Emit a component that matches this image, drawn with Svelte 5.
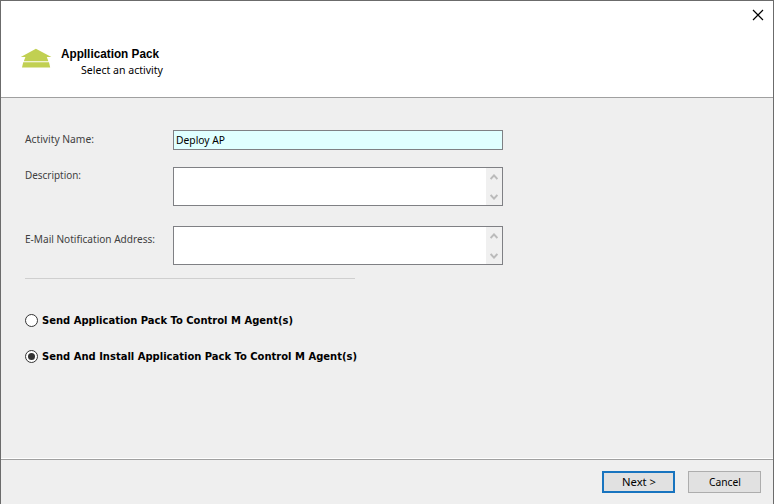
<script>
  let name = $state('Deploy AP');
  let selected = $state(1);
  const options = [
    { text: 'Send Application Pack To Control M Agent(s)', width: 251 },
    { text: 'Send And Install Application Pack To Control M Agent(s)', width: 315 }
  ];
</script>

{#snippet label(text, width, bold = false)}
  <svg class="label" class:bold {width} height="16" role="img" aria-label={text}>
    <text x="0" y="12" textLength={width} lengthAdjust="spacingAndGlyphs">{text}</text>
  </svg>
{/snippet}

{#snippet area(title)}
  <div class="area" role="textbox" aria-label={title} aria-multiline="true" tabindex="0">
    <div class="scroll">
      <svg width="8" height="6" viewBox="0 0 8 6"><path d="M.6 5 4 1.4 7.4 5" /></svg>
      <svg width="8" height="6" viewBox="0 0 8 6"><path d="M.6 1 4 4.6 7.4 1" /></svg>
    </div>
  </div>
{/snippet}

<main class="dialog">
  <header>
    <svg class="logo" width="32" height="22" viewBox="0 0 32 22">
      <path fill="#c1d052" d="M15.9 .8 31.4 8.9H26.8L28.4 13.2H3.8L5.4 8.9H.8zM3.2 14.3H29L30.2 19.6H2z" />
    </svg>
    <div class="titles">
      <div class="title">{@render label('Appllication Pack', 98, true)}</div>
      <div class="subtitle">{@render label('Select an activity', 82)}</div>
    </div>
    <button class="close" aria-label="Close">
      <svg width="12" height="12" viewBox="0 0 12 12"><path d="M1 1 11 11M11 1 1 11" /></svg>
    </button>
  </header>

  <section>
    <div class="row name">
      <div class="caption">{@render label('Activity Name:', 69)}</div>
      <div class="input" role="textbox" tabindex="0">{@render label(name, 49)}</div>
    </div>
    <div class="row description">
      <div class="caption">{@render label('Description:', 56)}</div>
      {@render area('Description')}
    </div>
    <div class="row email">
      <div class="caption">{@render label('E-Mail Notification Address:', 130)}</div>
      {@render area('E-Mail Notification Address')}
    </div>
    <hr />
    <div class="options">
      {#each options as option, i}
        <button class="option" onclick={() => (selected = i)}>
          <svg width="13" height="13" viewBox="0 0 13 13">
            <circle cx="6.5" cy="6.5" r="6" fill="#fff" stroke="#333" />
            {#if selected === i}<circle cx="6.5" cy="6.5" r="3.5" fill="#333" />{/if}
          </svg>
          {@render label(option.text, option.width, true)}
        </button>
      {/each}
    </div>
  </section>

  <footer>
    <button class="push primary">{@render label('Next >', 34)}</button>
    <button class="push">{@render label('Cancel', 32)}</button>
  </footer>
</main>

<style>
  .dialog {
    box-sizing: border-box;
    width: 774px;
    height: 504px;
    display: flex;
    flex-direction: column;
    border: 1px solid #6b6b6b;
    border-bottom: 0;
    background: #efefef;
    color: #000;
    font-family: "DejaVu Sans Condensed", "DejaVu Sans", sans-serif;
    font-size: 11px;
  }
  button {
    padding: 0;
    border: 0;
    background: none;
    color: inherit;
    font: inherit;
  }
  svg { display: block; flex: none; }
  .label { overflow: visible; fill: currentColor; font-family: "Noto Sans", sans-serif; font-size: 11.5px; }
  .label.bold { font-family: "DejaVu Sans Condensed", sans-serif; font-size: 11px; font-weight: bold; }
  .title :global(.label.bold) { font-family: "Liberation Sans", sans-serif; font-size: 12.5px; }
  header {
    box-sizing: border-box;
    height: 97px;
    display: flex;
    background: #fff;
    border-bottom: 1px solid #a0a0a0;
  }
  .logo { margin: 47px 0 0 19px; }
  .titles { margin: 45px 0 0 9px; }
  .title { height: 16px; }
  .subtitle { margin-left: 20px; }
  .close { margin: 8px 9px 0 auto; width: 12px; height: 12px; }
  .close path { stroke: #000; stroke-width: 1.2; fill: none; }
  section { flex: 1; padding: 32px 24px 0; }
  .row { display: flex; }
  .caption { width: 148px; color: #404040; }
  .name .caption { padding-top: 1px; }
  .email .caption { padding-top: 5px; }
  .input {
    box-sizing: border-box;
    width: 330px;
    height: 20px;
    padding: 1px 0 0 2px;
    border: 1px solid #7f8084;
    background: #e0ffff;
  }
  .area {
    box-sizing: border-box;
    width: 330px;
    height: 39px;
    display: flex;
    justify-content: flex-end;
    border: 1px solid #7f8084;
    background: #fff;
  }
  .description { margin-top: 17px; }
  .email { margin-top: 20px; }
  .scroll {
    box-sizing: border-box;
    width: 16px;
    padding: 6px 0 5px;
    display: flex;
    flex-direction: column;
    align-items: center;
    justify-content: space-between;
    background: #f0f0f0;
  }
  .scroll path { fill: none; stroke: #bbb; stroke-width: 2; }
  hr { width: 330px; height: 1px; margin: 13px 0 0; border: 0; background: #cfcfcf; }
  .options { display: flex; flex-direction: column; gap: 20px; padding-top: 33px; }
  .option { display: flex; align-items: center; gap: 4px; height: 16px; }
  footer {
    box-sizing: border-box;
    height: 45px;
    display: flex;
    justify-content: flex-end;
    gap: 13px;
    padding: 11px 12px 0 0;
    border-top: 1px solid #a0a0a0;
    box-shadow: 0 -1px #fff;
  }
  .push {
    box-sizing: border-box;
    width: 73px;
    height: 22px;
    display: flex;
    align-items: center;
    justify-content: center;
    border: 1px solid #adadad;
    background: #e1e1e1;
  }
  .push :global(.label) { margin-top: -1px; }
  .push.primary { border: 2px solid #1874bf; }
</style>
